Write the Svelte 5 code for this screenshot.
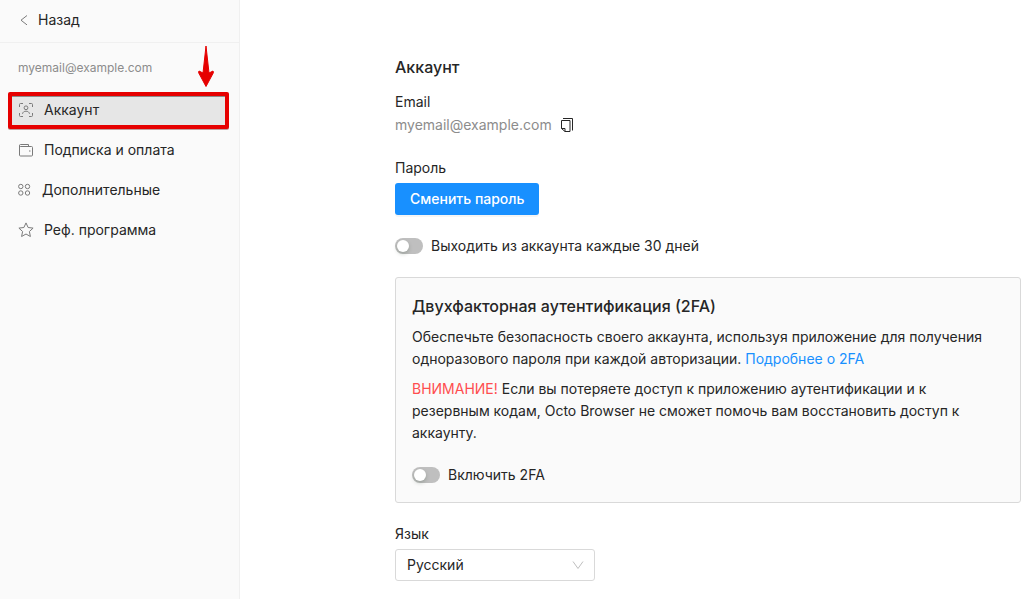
<script>
  const email = 'myemail@example.com';

  const menu = [
    { id: 'account', title: 'Аккаунт' },
    { id: 'billing', title: 'Подписка и оплата' },
    { id: 'extra', title: 'Дополнительные' },
    { id: 'referral', title: 'Реф. программа' }
  ];

  let active = $state('account');
  let autoLogout = $state(false);
  let twoFactor = $state(false);
  let language = $state('ru');

  function copyEmail() {
    navigator.clipboard?.writeText(email);
  }
</script>

<div class="layout">
  <aside class="sidebar">
    <button class="back">
      <svg width="8" height="12" viewBox="0 0 8 12"><path d="M7 1.500 1 6.200l6 4.700" /></svg>
      <span>Назад</span>
    </button>
    <div class="user">{email}</div>
    <nav>
      {#each menu as item}
        <button class="item" class:active={active === item.id} onclick={() => (active = item.id)}>
          {#if item.id === 'account'}
            <svg width="16" height="16" viewBox="0 0 16 16">
              <path d="M1.500 5V2.500a1 1 0 0 1 1-1H5M11 1.500h2.500a1 1 0 0 1 1 1V5M14.500 11v2.500a1 1 0 0 1-1 1H11M5 14.500H2.500a1 1 0 0 1-1-1V11" />
              <circle cx="8" cy="5.800" r="1.900" />
              <path d="M4.500 11.800c.4-1.800 1.700-2.600 3.500-2.600s3.100.8 3.500 2.600" />
            </svg>
          {:else if item.id === 'billing'}
            <svg width="16" height="16" viewBox="0 0 16 16">
              <path d="M1.500 3.500v9.500a1 1 0 0 0 1 1h11a1 1 0 0 0 1-1V5.500a1 1 0 0 0-1-1H2.500a1 1 0 0 1-1-1" />
              <path d="M1.500 3.500a1 1 0 0 1 1-1h8v2" />
              <path d="M11 9h1.500" />
            </svg>
          {:else if item.id === 'extra'}
            <svg width="14" height="14" viewBox="0 0 14 14">
              <circle cx="2.800" cy="3.500" r="2.200" />
              <circle cx="9.500" cy="3.500" r="2.200" />
              <circle cx="2.800" cy="10" r="2.200" />
              <circle cx="9.500" cy="10" r="2.200" />
            </svg>
          {:else}
            <svg width="16" height="16" viewBox="0 0 16 16">
              <path d="m8 .9 2.100 4.600 5 .6-3.700 3.400 1 5L8 12l-4.400 2.500 1-5L.9 6.100l5-.6z" />
            </svg>
          {/if}
          <span>{item.title}</span>
        </button>
      {/each}
    </nav>
    <svg class="arrow" width="18" height="43" viewBox="0 0 18 43">
      <path d="M9 1 12 28l4-2 .5 1.500L9 41.500 1.500 27.500 2 26l4 2z" />
    </svg>
  </aside>

  <main>
    <h1>Аккаунт</h1>

    <section class="field">
      <div>Email</div>
      <div class="email">
        <span>{email}</span>
        <button class="copy" aria-label="Скопировать" onclick={copyEmail}>
          <svg width="14" height="16" viewBox="0 0 14 16">
            <path d="M3 1.500h9.500v12" />
            <path d="M1.500 3.500h8.500v11H5l-3.500-3z" />
            <path d="M1.500 11.500H5v3" />
          </svg>
        </button>
      </div>
    </section>

    <section class="field password">
      <div>Пароль</div>
      <button class="primary">Сменить пароль</button>
    </section>

    <label class="switch">
      <input type="checkbox" role="switch" bind:checked={autoLogout} />
      <span>Выходить из аккаунта каждые 30 дней</span>
    </label>

    <section class="card">
      <h2>Двухфакторная аутентификация (2FA)</h2>
      <p>
        Обеспечьте безопасность своего аккаунта, используя приложение для получения одноразового пароля
        при каждой авторизации. <a href="#2fa">Подробнее о 2FA</a>
      </p>
      <p>
        <span class="danger">ВНИМАНИЕ!</span> Если вы потеряете доступ к приложению аутентификации и к
        резервным кодам, Octo Browser не сможет помочь вам восстановить доступ к аккаунту.
      </p>
      <label class="switch">
        <input type="checkbox" role="switch" bind:checked={twoFactor} />
        <span>Включить 2FA</span>
      </label>
    </section>

    <section class="field language">
      <label for="language">Язык</label>
      <div class="select">
        <select id="language" bind:value={language}>
          <option value="ru">Русский</option>
          <option value="en">English</option>
        </select>
        <svg width="12" height="12" viewBox="0 0 12 12"><path d="m1 2.500 5 7 5-7" /></svg>
      </div>
    </section>
  </main>
</div>

<style>
  :global(body) {
    margin: 0;
    background: #fff;
  }

  .layout {
    display: flex;
    min-height: 100vh;
    font-family: Inter, 'Open Sans', sans-serif;
    font-size: 14px;
    line-height: 22px;
    color: #262626;
  }

  button,
  select {
    font: inherit;
    color: inherit;
    cursor: pointer;
  }

  svg {
    flex: none;
    fill: none;
    stroke: #7a7a7a;
  }

  .sidebar {
    position: relative;
    flex: none;
    box-sizing: border-box;
    width: 240px;
    background: #fafafa;
    border-right: 1px solid #f0f0f0;
  }

  .back {
    display: flex;
    align-items: center;
    gap: 10px;
    width: 100%;
    padding: 9px 20px 11px;
    border: 0;
    border-bottom: 1px solid #f0f0f0;
    background: none;
  }

  .user {
    padding: 14px 18px 13px;
    font-size: 12px;
    color: #8c8c8c;
  }

  nav {
    padding: 0 10px 0 8px;
  }

  .item {
    display: flex;
    align-items: center;
    gap: 10px;
    width: 100%;
    height: 40px;
    padding: 0 10px;
    border: 0;
    background: none;
    text-align: left;
  }

  .item.active {
    height: 37px;
    margin-bottom: 1px;
    padding: 0 6px 1px;
    border: 4px solid #e60000;
    border-radius: 2px;
    background: #e6e6e6;
    box-shadow: inset 0 1px 0 #8c8c8c, 0 1px 0 #bfa0a0;
  }

  .arrow {
    position: absolute;
    top: 45px;
    left: 197px;
    fill: #e60000;
    stroke: #e60000;
    stroke-linejoin: round;
  }

  main {
    flex: 1;
    min-width: 0;
    padding: 55px 15px 18px 155px;
  }

  h1,
  h2 {
    margin: 0;
    font-size: 16px;
    line-height: 24px;
    font-weight: 500;
  }

  .field {
    margin-top: 12px;
  }

  .email {
    display: flex;
    align-items: center;
    gap: 8px;
    margin-top: 1px;
    color: #8c8c8c;
  }

  .copy {
    display: flex;
    padding: 0;
    border: 0;
    background: none;
  }

  .copy svg {
    stroke: #262626;
  }

  .password {
    margin-top: 21px;
  }

  .primary {
    display: block;
    height: 32px;
    margin-top: 4px;
    padding: 0 15px;
    border: 0;
    border-radius: 3px;
    background: #1890ff;
    box-shadow: 0 2px 0 rgba(0, 0, 0, 0.04);
    color: #fff;
    font-weight: 500;
  }

  .switch {
    display: flex;
    align-items: center;
    gap: 8px;
    margin-top: 20px;
  }

  .switch input {
    appearance: none;
    display: flex;
    flex: none;
    box-sizing: border-box;
    width: 28px;
    height: 16px;
    margin: 0;
    padding: 2px;
    border-radius: 8px;
    background: #bfbfbf;
    cursor: pointer;
  }

  .switch input::before {
    content: '';
    width: 12px;
    height: 12px;
    border-radius: 50%;
    background: #fff;
    box-shadow: 0 2px 4px rgba(0, 35, 11, 0.2);
  }

  .switch input:checked {
    justify-content: flex-end;
    background: #1890ff;
  }

  .card {
    margin-top: 20px;
    padding: 16px;
    border: 1px solid #d9d9d9;
    border-radius: 3px;
    background: #fafafa;
  }

  .card p {
    margin: 8px 0 0;
  }

  a {
    color: #1890ff;
    text-decoration: none;
  }

  .danger {
    color: #ff4d4f;
  }

  .language {
    margin-top: 20px;
  }

  .language label {
    display: block;
  }

  .select {
    position: relative;
    width: 200px;
    margin-top: 4px;
  }

  .select select {
    appearance: none;
    display: block;
    width: 100%;
    height: 32px;
    padding: 0 30px 0 11px;
    border: 1px solid #d9d9d9;
    border-radius: 3px;
    background: #fff;
  }

  .select svg {
    position: absolute;
    top: 10px;
    right: 11px;
    stroke: #bfbfbf;
    pointer-events: none;
  }
</style>
